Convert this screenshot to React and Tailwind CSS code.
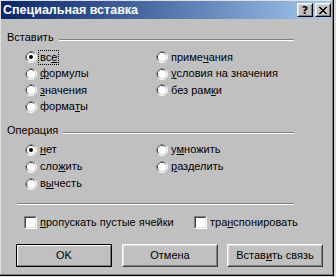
import React from "react";

function Radio({ checked }) {
  return (
    <svg width="12" height="12" viewBox="0 0 12 12" className="shrink-0">
      <circle cx="6" cy="6" r="5.5" fill="none" stroke="#ffffff" />
      <path d="M2.11 9.89 A5.5 5.5 0 0 1 9.89 2.11" fill="none" stroke="#808080" />
      <circle cx="6" cy="6" r="4.5" fill="none" stroke="#dfdfdf" />
      <path d="M2.82 9.18 A4.5 4.5 0 0 1 9.18 2.82" fill="none" stroke="#404040" />
      <circle cx="6" cy="6" r="4" fill="#ffffff" />
      {checked && <circle cx="6" cy="6" r="2" fill="#000000" />}
    </svg>
  );
}

function Label({ children, focus }) {
  return (
    <span
      className={
        focus
          ? "ml-[1px] px-[1px] h-[15px] flex items-center border border-dotted border-black whitespace-nowrap"
          : "ml-[1px] px-[1px] h-[15px] flex items-center border border-transparent whitespace-nowrap"
      }
    >
      {children}
    </span>
  );
}

function U({ children }) {
  return <span className="underline underline-offset-[1px]">{children}</span>;
}

function RadioRow({ checked, focus, children, tall }) {
  return (
    <div className={tall ? "h-[17px] flex items-center" : "h-[16.5px] flex items-center"}>
      <Radio checked={checked} />
      <Label focus={focus}>{children}</Label>
    </div>
  );
}

function Checkbox() {
  return (
    <div className="w-[13px] h-[13px] shrink-0 border border-t-[#808080] border-l-[#808080] border-r-white border-b-white">
      <div className="h-full border border-t-[#404040] border-l-[#404040] border-r-[#dfdfdf] border-b-[#dfdfdf] bg-white" />
    </div>
  );
}

function Etched({ className }) {
  return (
    <div className={"h-[2px] border-t border-b border-t-[#808080] border-b-white " + className} />
  );
}

function Button({ children, isDefault }) {
  if (isDefault) {
    return (
      <div className="w-[96px] h-[23px] border border-black">
        <div className="h-full border border-t-white border-l-white border-r-[#808080] border-b-[#808080]">
          <div className="h-full flex items-center justify-center">{children}</div>
        </div>
      </div>
    );
  }
  return (
    <div className="w-[96px] h-[23px]">
      <div className="h-full border border-t-white border-l-white border-r-[#404040] border-b-[#404040]">
        <div className="h-full flex items-center justify-center border border-t-[#dfdfdf] border-l-[#dfdfdf] border-r-[#808080] border-b-[#808080]">
          {children}
        </div>
      </div>
    </div>
  );
}

function TitleButton({ children }) {
  return (
    <div className="w-[16px] h-[14px] bg-[#c0c0c0] border border-t-white border-l-white border-r-black border-b-black">
      <div className="h-full flex items-center justify-center border border-t-[#dfdfdf] border-l-[#dfdfdf] border-r-[#808080] border-b-[#808080]">
        {children}
      </div>
    </div>
  );
}

function CloseGlyph() {
  return (
    <svg width="8" height="7" viewBox="0 0 8 7" shapeRendering="crispEdges">
      <rect x="0" y="0" width="2" height="1" fill="#000" />
      <rect x="6" y="0" width="2" height="1" fill="#000" />
      <rect x="1" y="1" width="2" height="1" fill="#000" />
      <rect x="5" y="1" width="2" height="1" fill="#000" />
      <rect x="2" y="2" width="4" height="1" fill="#000" />
      <rect x="3" y="3" width="2" height="1" fill="#000" />
      <rect x="2" y="4" width="4" height="1" fill="#000" />
      <rect x="1" y="5" width="2" height="1" fill="#000" />
      <rect x="5" y="5" width="2" height="1" fill="#000" />
      <rect x="0" y="6" width="2" height="1" fill="#000" />
      <rect x="6" y="6" width="2" height="1" fill="#000" />
    </svg>
  );
}

export default function App() {
  return (
    <div className="w-[336px] h-[277px] bg-[#d8d8d8] overflow-hidden font-['Liberation_Sans',Arial,sans-serif] text-[11px] leading-[13px] text-black">
      <div className="w-[334px] h-[276px] border-r border-b border-black">
        <div className="h-full border-r border-b border-[#808080] bg-[#c0c0c0]">
          <div className="h-full border-t border-l border-[#dfdfdf] flex flex-col">
            {/* Title bar */}
            <div className="h-[18px] shrink-0 flex items-center bg-linear-to-r from-[#0a246a] to-[#a6caf0] pl-[2px] pr-[1px]">
              <span className="text-white font-bold text-[12.5px] leading-[14px] whitespace-nowrap">
                Специальная вставка
              </span>
              <div className="ml-auto flex items-center gap-[2px]">
                <TitleButton>
                  <span className="font-bold text-[11px] leading-[11px] font-['DejaVu_Sans',sans-serif]">?</span>
                </TitleButton>
                <TitleButton>
                  <CloseGlyph />
                </TitleButton>
              </div>
            </div>

            {/* Вставить */}
            <div className="mt-[12px] ml-[6px] mr-[38px] h-[13px] flex items-start">
              <span className="whitespace-nowrap">Вставить</span>
              <Etched className="flex-1 ml-[5px] mt-[8px]" />
            </div>
            <div className="mt-[5px] ml-[24px] flex">
              <div className="w-[131px] flex flex-col">
                <RadioRow checked focus>
                  вс<U>е</U>
                </RadioRow>
                <RadioRow>
                  <U>ф</U>ормулы
                </RadioRow>
                <RadioRow>
                  <U>з</U>начения
                </RadioRow>
                <RadioRow>
                  форма<U>т</U>ы
                </RadioRow>
              </div>
              <div className="flex flex-col">
                <RadioRow>
                  приме<U>ч</U>ания
                </RadioRow>
                <RadioRow>
                  <U>у</U>словия на значения
                </RadioRow>
                <RadioRow>
                  без рам<U>к</U>и
                </RadioRow>
              </div>
            </div>

            {/* Операция */}
            <div className="mt-[9px] ml-[6px] mr-[38px] h-[13px] flex items-start">
              <span className="whitespace-nowrap">Операция</span>
              <Etched className="flex-1 ml-[5px] mt-[8px]" />
            </div>
            <div className="mt-[4px] ml-[24px] flex">
              <div className="w-[131px] flex flex-col">
                <RadioRow checked tall>
                  <U>н</U>ет
                </RadioRow>
                <RadioRow tall>
                  сло<U>ж</U>ить
                </RadioRow>
                <RadioRow tall>
                  в<U>ы</U>честь
                </RadioRow>
              </div>
              <div className="flex flex-col">
                <RadioRow tall>
                  у<U>м</U>ножить
                </RadioRow>
                <RadioRow tall>
                  <U>р</U>азделить
                </RadioRow>
              </div>
            </div>

            <Etched className="mt-[11px] ml-[16px] mr-[38px]" />

            {/* Checkboxes */}
            <div className="mt-[9px] ml-[23px] h-[16px] flex items-center">
              <div className="w-[170px] flex items-center">
                <Checkbox />
                <Label>
                  <U>п</U>ропускать пустые ячейки
                </Label>
              </div>
              <div className="flex items-center">
                <Checkbox />
                <Label>
                  тра<U>н</U>спонировать
                </Label>
              </div>
            </div>

            {/* Buttons */}
            <div className="mt-[14px] ml-[15px] flex">
              <Button isDefault>OK</Button>
              <div className="ml-[10px]">
                <Button>Отмена</Button>
              </div>
              <div className="ml-[9px]">
                <Button>
                  <span>
                    Встав<U>и</U>ть связь
                  </span>
                </Button>
              </div>
            </div>
          </div>
        </div>
      </div>
    </div>
  );
}
